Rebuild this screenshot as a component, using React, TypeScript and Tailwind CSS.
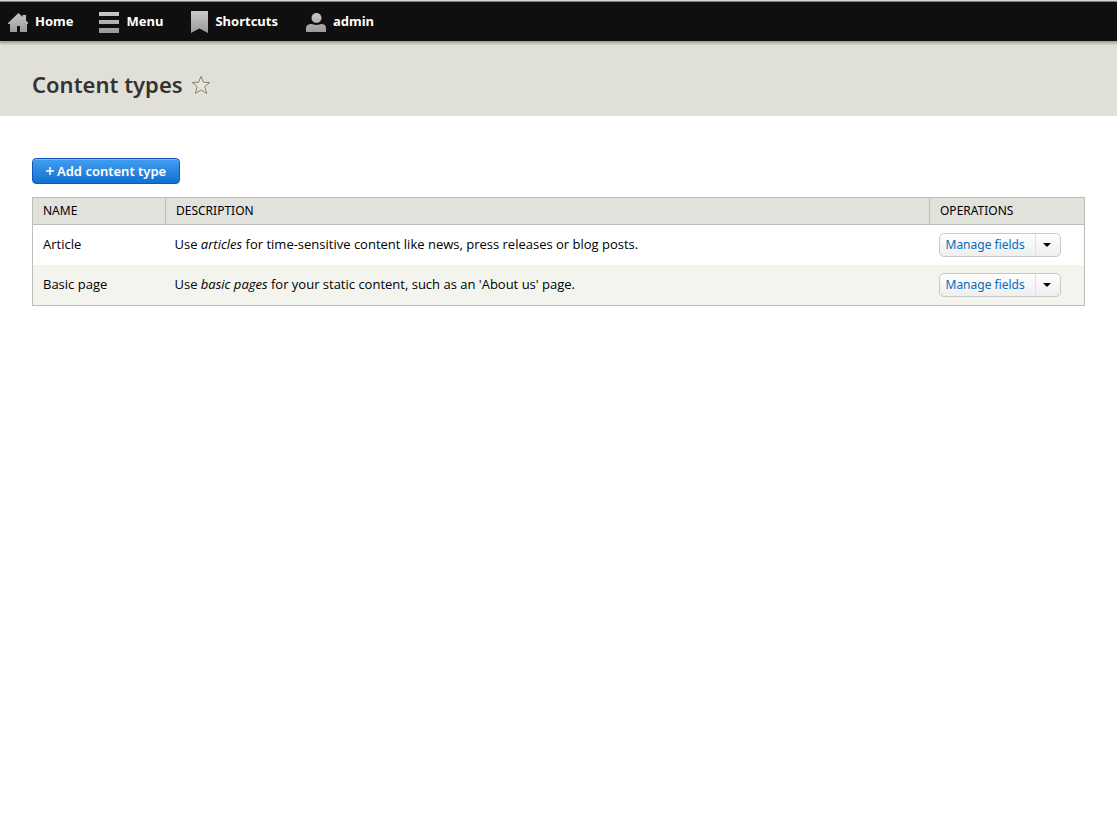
import React from "react";

type ContentType = {
  name: string;
  description: React.ReactNode;
};

const contentTypes: ContentType[] = [
  {
    name: "Article",
    description: (
      <>
        Use <em>articles</em> for time-sensitive content like news, press releases or blog posts.
      </>
    ),
  },
  {
    name: "Basic page",
    description: (
      <>
        Use <em>basic pages</em> for your static content, such as an 'About us' page.
      </>
    ),
  },
];

function IconGradient({ id }: { id: string }) {
  return (
    <defs>
      <linearGradient id={id} x1="0" y1="0" x2="0" y2="22" gradientUnits="userSpaceOnUse">
        <stop offset="0" stopColor="#cbcbcb" />
        <stop offset="1" stopColor="#989898" />
      </linearGradient>
    </defs>
  );
}

function HomeIcon() {
  return (
    <svg width="20" height="22" viewBox="0 0 20 22" aria-hidden="true">
      <IconGradient id="home-fill" />
      <path
        fill="url(#home-fill)"
        d="M10.500 2 14.500 6V4h3.500v5.500l2 2V13h-1v8h-7v-6H9v6H2v-8H0v-1z"
      />
    </svg>
  );
}

function MenuIcon() {
  return (
    <svg width="20" height="22" viewBox="0 0 20 22" aria-hidden="true">
      <IconGradient id="menu-fill" />
      <path fill="url(#menu-fill)" d="M0 1h20v4H0zM0 9h20v4H0zM0 17h20v5H0z" />
    </svg>
  );
}

function BookmarkIcon() {
  return (
    <svg width="17" height="22" viewBox="0 0 17 22" aria-hidden="true">
      <IconGradient id="bookmark-fill" />
      <path fill="url(#bookmark-fill)" d="M0 0h17v22l-8.500-4.500L0 22z" />
    </svg>
  );
}

function UserIcon() {
  return (
    <svg width="20" height="22" viewBox="0 0 20 22" aria-hidden="true">
      <IconGradient id="user-fill" />
      <g fill="url(#user-fill)">
        <circle cx="10.5" cy="7" r="5" />
        <path d="M0 21v-4c0-2.600 3-4 5.500-4 1.500 0 2.500 1 5 1s3.500-1 5-1c2.500 0 4.500 1.400 4.500 4v4z" />
      </g>
    </svg>
  );
}

function StarIcon() {
  return (
    <svg width="20" height="20" viewBox="0 0 20 20" aria-hidden="true">
      <path
        fill="#e4e4dd"
        stroke="#86866f"
        strokeWidth="1"
        strokeLinejoin="round"
        d="M10 1.300 12.400 7.300 18.700 7.500 13.800 11.600 15.600 18.400 10 14.900 4.400 18.400 6.200 11.600 1.300 7.500 7.600 7.300z"
      />
    </svg>
  );
}

function Toolbar() {
  const link = "flex items-center text-[13px] leading-5 font-bold text-white";
  const label = "pb-0.5";
  return (
    <nav
      aria-label="Administration"
      className="relative flex h-[41px] items-center border-t border-[#d0d4d4] bg-[#0f0f0f] pt-px pl-2 shadow-[inset_0_1px_0_#7f8383,0_1px_3px_1px_rgba(0,0,0,0.33)]"
    >
      <a href="#home" className={`${link} mr-[25px] gap-[7px]`}>
        <HomeIcon />
        <span className={label}>Home</span>
      </a>
      <a href="#menu" className={`${link} mr-7 gap-2`}>
        <MenuIcon />
        <span className={label}>Menu</span>
      </a>
      <a href="#shortcuts" className={`${link} mr-7 gap-[7px]`}>
        <BookmarkIcon />
        <span className={label}>Shortcuts</span>
      </a>
      <a href="#admin" className={`${link} gap-[7px]`}>
        <UserIcon />
        <span className={label}>admin</span>
      </a>
    </nav>
  );
}

function OperationsButton() {
  return (
    <div className="inline-flex h-6 items-stretch overflow-hidden rounded-[5px] border border-[#c8c8c8] bg-linear-to-b from-white to-[#eeeeee] align-top text-xs">
      <a href="#manage-fields" className="flex w-[95px] items-center pl-1.5 leading-5 text-[#0a6ab8]">
        Manage fields
      </a>
      <button
        type="button"
        aria-label="List additional actions"
        className="flex w-[25px] items-center justify-center border-l border-[#e2e2e2] pr-0.5"
      >
        <svg width="8" height="4" viewBox="0 0 8 4" aria-hidden="true">
          <path d="M0 0h8L4 4z" fill="#000" />
        </svg>
      </button>
    </div>
  );
}

function ContentTypesTable() {
  const head = "border border-[#bebfb9] px-2.5 text-left font-normal";
  return (
    <table className="mt-[13px] w-full table-fixed border-collapse border border-[#bebfb9]">
      <colgroup>
        <col className="w-[133px]" />
        <col />
        <col className="w-[155px]" />
      </colgroup>
      <thead className="bg-[#e1e2dc] text-xs">
        <tr className="h-[27px]">
          <th scope="col" className={head}>NAME</th>
          <th scope="col" className={head}>DESCRIPTION</th>
          <th scope="col" className={head}>OPERATIONS</th>
        </tr>
      </thead>
      <tbody className="font-['Open_Sans','Noto_Sans',sans-serif] text-[13px] leading-5">
        {contentTypes.map((type) => (
          <tr key={type.name} className="h-10 last:h-[41px] even:bg-[#f3f4ee]">
            <td className="px-2.5 pb-0.5">{type.name}</td>
            <td className="px-[9px] pb-0.5">{type.description}</td>
            <td className="px-[9px] font-['Noto_Sans','Open_Sans',sans-serif]">
              <OperationsButton />
            </td>
          </tr>
        ))}
      </tbody>
    </table>
  );
}

export default function App() {
  return (
    <div className="min-h-screen bg-white font-['Noto_Sans','Open_Sans',sans-serif] text-xs text-black">
      <Toolbar />
      <header className="flex h-[75px] items-center gap-2 bg-[#e0e0d8] px-8 pt-3">
        <h1 className="pb-0.5 text-[22px] leading-8 font-semibold text-[#333333]">Content types</h1>
        <button type="button" aria-label="Add to shortcuts">
          <StarIcon />
        </button>
      </header>
      <main className="px-8 pt-[42px]">
        <a
          href="#add"
          className="flex h-[26px] w-fit items-center gap-[3px] rounded-[4px] border border-[#1457bf] bg-linear-to-b from-[#419ff1] to-[#1071d1] px-[13px] text-[13px] leading-5 font-semibold text-white shadow-[inset_0_1px_0_rgba(255,255,255,0.3)]"
        >
          <svg width="8" height="8" viewBox="0 0 8 8" aria-hidden="true">
            <path d="M4 0v8M0 4h8" stroke="#fff" strokeWidth="1.5" />
          </svg>
          Add content type
        </a>
        <ContentTypesTable />
      </main>
    </div>
  );
}
